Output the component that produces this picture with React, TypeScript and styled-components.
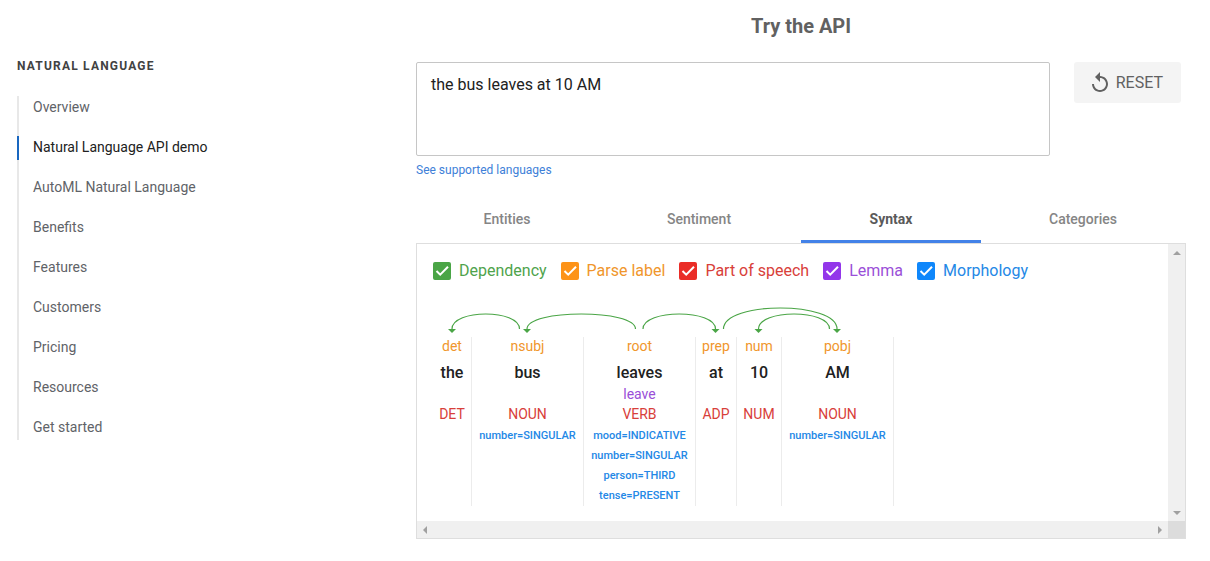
import { useState } from "react";
import styled, { createGlobalStyle } from "styled-components";

const GlobalStyle = createGlobalStyle`
  *, *::before, *::after { box-sizing: border-box; }
  body {
    margin: 0;
    background: #fff;
    color: #212121;
    font-family: Roboto, "Liberation Sans", sans-serif;
    font-size: 14px;
  }
`;

const Page = styled.div`
  display: grid;
  grid-template-columns: minmax(220px, 1fr) minmax(0, 770px);
  column-gap: 24px;
  padding: 14px 24px 22px 17px;
`;

const Sidebar = styled.nav`
  padding-top: 42px;
`;

const SidebarHeading = styled.h2`
  margin: 0 0 20px;
  font-size: 12px;
  line-height: 20px;
  font-weight: 700;
  letter-spacing: 0.1em;
  color: #424242;
`;

const NavList = styled.ul`
  display: flex;
  flex-direction: column;
  gap: 16px;
  margin: 0;
  padding: 0;
  list-style: none;
  box-shadow: inset 2px 0 #e8e8e8;
`;

const NavLink = styled.a<{ $active: boolean }>`
  display: block;
  padding: 0 0 2px 14px;
  border-left: 2px solid ${(p) => (p.$active ? "#1967c0" : "transparent")};
  line-height: 22px;
  color: ${(p) => (p.$active ? "#212121" : "#5f6368")};
  text-decoration: none;
`;

const Main = styled.main`
  min-width: 0;
`;

const Title = styled.h1`
  margin: 0 0 24px;
  font-size: 20px;
  line-height: 24px;
  font-weight: 700;
  color: #616161;
  text-align: center;
`;

const InputRow = styled.div`
  display: flex;
  align-items: flex-start;
  gap: 24px;
  padding-right: 5px;
`;

const TextInput = styled.textarea`
  display: block;
  flex: 1;
  min-width: 0;
  height: 94px;
  padding: 10px 14px;
  border: 1px solid #c6c6c6;
  border-radius: 2px;
  outline: none;
  resize: none;
  background: #fff;
  color: #212121;
  font: 16px/24px Roboto, "Liberation Sans", sans-serif;
`;

const ResetButton = styled.button`
  display: flex;
  align-items: center;
  gap: 4px;
  height: 41px;
  padding: 0 18px 0 14px;
  border: 0;
  border-radius: 3px;
  background: #f4f4f4;
  color: #616161;
  font: 16px/24px Roboto, "Liberation Sans", sans-serif;
  cursor: pointer;
`;

const LanguagesLink = styled.a`
  display: inline-block;
  margin-top: 4px;
  font-size: 12px;
  line-height: 20px;
  color: #4080d8;
  text-decoration: none;
`;

const Tabs = styled.div`
  display: grid;
  grid-template-columns: repeat(4, 1fr);
  gap: 12px;
  margin-top: 15px;
  padding: 0 13px 0 1px;
`;

const Tab = styled.button<{ $active: boolean }>`
  height: 48px;
  padding: 3px 0 0;
  border: 0;
  border-bottom: 3px solid ${(p) => (p.$active ? "#4382e8" : "transparent")};
  background: none;
  color: ${(p) => (p.$active ? "#5a5a5a" : "#858585")};
  font: ${(p) => (p.$active ? 700 : 500)} 14px/20px Roboto, "Liberation Sans", sans-serif;
  cursor: pointer;
`;

const Panel = styled.section`
  display: grid;
  grid-template-columns: minmax(0, 1fr) 17px;
  grid-template-rows: auto 17px;
  border: 1px solid #dedede;
`;

const PanelContent = styled.div`
  overflow: hidden;
  padding: 15px 16px;
`;

const ScrollTrack = styled.div<{ $vertical?: boolean }>`
  display: flex;
  flex-direction: ${(p) => (p.$vertical ? "column" : "row")};
  justify-content: space-between;
  background: #f0f0f0;
`;

const ScrollButton = styled.button`
  display: grid;
  place-items: center;
  width: 17px;
  height: 17px;
  padding: 0;
  border: 0;
  background: none;
  color: #a0a0a0;
`;

const ScrollCorner = styled.div`
  background: #dcdcdc;
`;

const Legend = styled.div`
  display: flex;
  flex-wrap: wrap;
  gap: 14px;
`;

const LegendLabel = styled.label<{ $color: string }>`
  display: flex;
  align-items: center;
  gap: 8px;
  font-size: 16px;
  line-height: 24px;
  color: ${(p) => p.$color};
  cursor: pointer;
`;

const CheckFrame = styled.span`
  display: grid;
  width: 18px;
  height: 18px;

  > * {
    grid-area: 1 / 1;
  }

  svg {
    pointer-events: none;
  }

  input:not(:checked) + svg {
    visibility: hidden;
  }
`;

const CheckInput = styled.input<{ $color: string }>`
  appearance: none;
  width: 18px;
  height: 18px;
  margin: 0;
  border: 2px solid ${(p) => p.$color};
  border-radius: 2px;

  &:checked {
    background: ${(p) => p.$color};
  }
`;

const ArcDrawing = styled.svg`
  display: block;
  margin-top: 17px;
`;

const TokenTable = styled.table`
  table-layout: fixed;
  width: 461px;
  border-spacing: 0;
  text-align: center;
`;

const TokenColumn = styled.col<{ $width: number }>`
  width: ${(p) => p.$width}px;
`;

const Cell = styled.td<{ $color: string }>`
  height: 20px;
  padding: 0;
  border-right: 1px solid #ececec;
  line-height: 18px;
  vertical-align: top;
  color: ${(p) => p.$color};
`;

const WordCell = styled(Cell)`
  height: 28px;
  padding-top: 7px;
  font-size: 16px;
  font-weight: 500;
`;

const SmallCell = styled(Cell)`
  padding-top: 1px;
  font-size: 11px;
  font-weight: 500;
`;

const Feature = styled.div`
  line-height: 20px;
`;

const navItems = [
  "Overview",
  "Natural Language API demo",
  "AutoML Natural Language",
  "Benefits",
  "Features",
  "Customers",
  "Pricing",
  "Resources",
  "Get started",
];

const tabNames = ["Entities", "Sentiment", "Syntax", "Categories"];

const layers = [
  { name: "Dependency", box: "#4aa546", text: "#4fa34c" },
  { name: "Parse label", box: "#fd9318", text: "#f0962c" },
  { name: "Part of speech", box: "#ea2d27", text: "#d8403a" },
  { name: "Lemma", box: "#9336ea", text: "#9a4fd8" },
  { name: "Morphology", box: "#0f87fb", text: "#2488e6" },
];

const tokens = [
  { label: "det", word: "the", lemma: "", pos: "DET", width: 39, features: [] },
  { label: "nsubj", word: "bus", lemma: "", pos: "NOUN", width: 112, features: ["number=SINGULAR"] },
  {
    label: "root",
    word: "leaves",
    lemma: "leave",
    pos: "VERB",
    width: 112,
    features: ["mood=INDICATIVE", "number=SINGULAR", "person=THIRD", "tense=PRESENT"],
  },
  { label: "prep", word: "at", lemma: "", pos: "ADP", width: 41, features: [] },
  { label: "num", word: "10", lemma: "", pos: "NUM", width: 45, features: [] },
  { label: "pobj", word: "AM", lemma: "", pos: "NOUN", width: 112, features: ["number=SINGULAR"] },
];

/* from: x of the head word, to: x of the dependent, lift: control point height */
const arcs = [
  { from: 86.5, to: 19, lift: 20 },
  { from: 202.5, to: 94, lift: 20 },
  { from: 210, to: 282.5, lift: 20 },
  { from: 396.5, to: 325.5, lift: 20 },
  { from: 290.5, to: 404, lift: 28 },
];

const arrowPoints = {
  up: "4,2 8,6 0,6",
  down: "0,2 8,2 4,6",
  left: "1,4 5,0 5,8",
  right: "2,0 6,4 2,8",
};

function Arrow({ direction }: { direction: keyof typeof arrowPoints }) {
  return (
    <ScrollButton aria-label={`Scroll ${direction}`}>
      <svg width="8" height="8" viewBox="0 0 8 8" fill="currentColor">
        <polygon points={arrowPoints[direction]} />
      </svg>
    </ScrollButton>
  );
}

function ReplayIcon() {
  return (
    <svg width="24" height="24" viewBox="0 0 24 24" fill="currentColor" aria-hidden="true">
      <path d="M12 5V1L7 6l5 5V7c3.31 0 6 2.69 6 6s-2.69 6-6 6-6-2.69-6-6H4c0 4.42 3.58 8 8 8s8-3.58 8-8-3.58-8-8-8z" />
    </svg>
  );
}

function DependencyArcs({ visible }: { visible: boolean }) {
  return (
    <ArcDrawing width="461" height="37" viewBox="0 0 461 37" aria-hidden="true">
      {visible &&
        arcs.map(({ from, to, lift }) => (
          <g key={`${from}-${to}`}>
            <path
              d={`M${from} 29C${from} ${29 - lift} ${to} ${29 - lift} ${to} 29`}
              fill="none"
              stroke="#4aa546"
              strokeWidth="1.2"
            />
            <path d={`M${to - 4} 29h8l-4 4z`} fill="#4aa546" />
          </g>
        ))}
    </ArcDrawing>
  );
}

export default function App() {
  const [text, setText] = useState("the bus leaves at 10 AM");
  const [tab, setTab] = useState("Syntax");
  const [shown, setShown] = useState([true, true, true, true, true]);
  const toggle = (index: number) => setShown(shown.map((on, i) => (i === index ? !on : on)));

  return (
    <>
      <GlobalStyle />
      <Page>
        <Sidebar>
          <SidebarHeading>NATURAL LANGUAGE</SidebarHeading>
          <NavList>
            {navItems.map((item, i) => (
              <li key={item}>
                <NavLink href="#" $active={i === 1}>
                  {item}
                </NavLink>
              </li>
            ))}
          </NavList>
        </Sidebar>
        <Main>
          <Title>Try the API</Title>
          <InputRow>
            <TextInput
              aria-label="Text to analyze"
              spellCheck={false}
              value={text}
              onChange={(e) => setText(e.target.value)}
            />
            <ResetButton onClick={() => setText("")}>
              <ReplayIcon />
              RESET
            </ResetButton>
          </InputRow>
          <LanguagesLink href="#">See supported languages</LanguagesLink>
          <Tabs role="tablist">
            {tabNames.map((name) => (
              <Tab
                key={name}
                role="tab"
                aria-selected={name === tab}
                $active={name === tab}
                onClick={() => setTab(name)}
              >
                {name}
              </Tab>
            ))}
          </Tabs>
          <Panel>
            <PanelContent>
              <Legend>
                {layers.map((layer, i) => (
                  <LegendLabel key={layer.name} $color={layer.text}>
                    <CheckFrame>
                      <CheckInput
                        type="checkbox"
                        $color={layer.box}
                        checked={shown[i]}
                        onChange={() => toggle(i)}
                      />
                      <svg width="18" height="18" viewBox="0 0 18 18" aria-hidden="true">
                        <path d="M3.5 9l3.7 3.7L15 4.8" fill="none" stroke="#fff" strokeWidth="2" />
                      </svg>
                    </CheckFrame>
                    {layer.name}
                  </LegendLabel>
                ))}
              </Legend>
              <DependencyArcs visible={shown[0]} />
              <TokenTable>
                <colgroup>
                  {tokens.map((t, i) => (
                    <TokenColumn key={i} $width={t.width} />
                  ))}
                </colgroup>
                <tbody>
                  <tr>
                    {tokens.map((t, i) => (
                      <Cell key={i} $color={layers[1].text}>{shown[1] && t.label}</Cell>
                    ))}
                  </tr>
                  <tr>
                    {tokens.map((t, i) => (
                      <WordCell key={i} $color="#212121">{t.word}</WordCell>
                    ))}
                  </tr>
                  <tr>
                    {tokens.map((t, i) => (
                      <Cell key={i} $color={layers[3].text}>{shown[3] && t.lemma}</Cell>
                    ))}
                  </tr>
                  <tr>
                    {tokens.map((t, i) => (
                      <Cell key={i} $color={layers[2].text}>{shown[2] && t.pos}</Cell>
                    ))}
                  </tr>
                  <tr>
                    {tokens.map((t, i) => (
                      <SmallCell key={i} $color={layers[4].text}>
                        {shown[4] && t.features.map((f) => <Feature key={f}>{f}</Feature>)}
                      </SmallCell>
                    ))}
                  </tr>
                </tbody>
              </TokenTable>
            </PanelContent>
            <ScrollTrack $vertical>
              <Arrow direction="up" />
              <Arrow direction="down" />
            </ScrollTrack>
            <ScrollTrack>
              <Arrow direction="left" />
              <Arrow direction="right" />
            </ScrollTrack>
            <ScrollCorner />
          </Panel>
        </Main>
      </Page>
    </>
  );
}
